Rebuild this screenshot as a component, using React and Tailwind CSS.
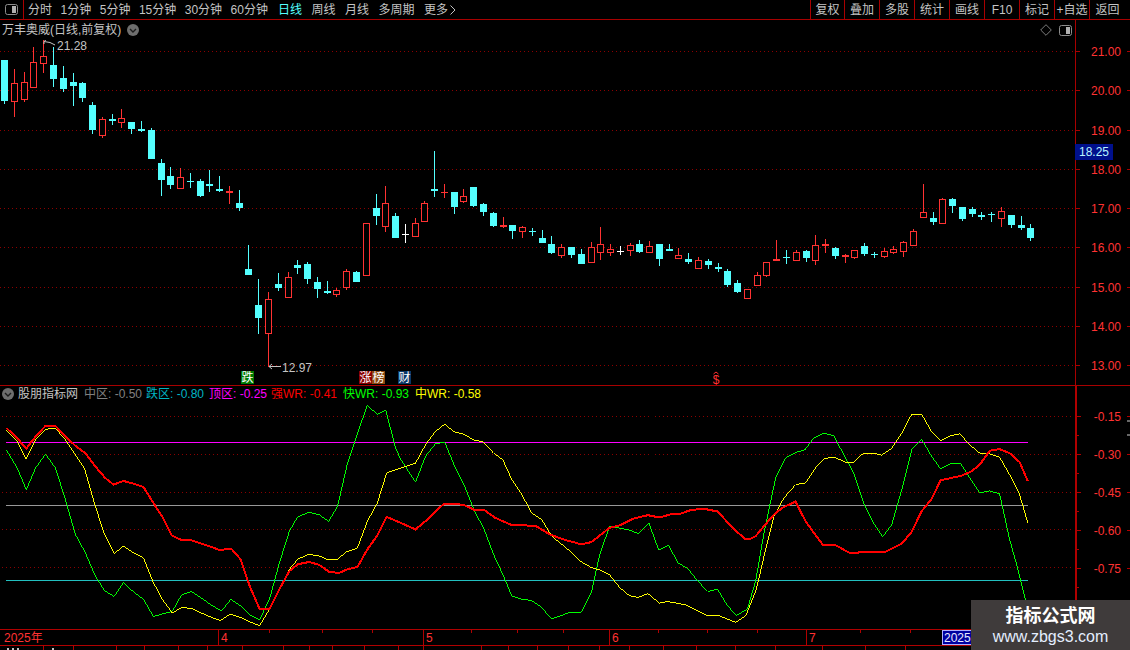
import React from "react";

// [x, bodyTop, bodyBottom, wickTop, wickBottom, kind] kind: c cyan, r red, w white
const candles = [
  [4.5, 60, 101, 60, 104, "c"], [14.5, 83, 101, 69, 117, "r"], [24.5, 82, 99, 72, 102, "r"], [33.5, 62, 87, 47, 87, "r"],
  [43.5, 56, 63, 40, 73, "r"], [53.5, 65, 79, 47, 87, "c"], [63.5, 78, 89, 66, 92, "c"], [73.5, 82, 86, 73, 106, "c"],
  [82.5, 83, 98, 82, 102, "c"], [92.5, 105, 130, 102, 134, "c"], [102.5, 119, 135, 117, 138, "r"], [112.5, 119, 121, 114, 125, "c"],
  [121.5, 118, 122, 109, 128, "r"], [131.5, 122, 129, 122, 134, "c"], [141.5, 129, 131, 121, 132, "c"], [151.5, 130, 159, 128, 159, "c"],
  [161.5, 163, 180, 159, 196, "c"], [170.5, 176, 185, 167, 189, "c"], [180.5, 177, 188, 168, 189, "r"], [190.5, 181, 182, 173, 188, "c"],
  [200.5, 181, 196, 179, 197, "c"], [209.5, 184, 186, 170, 192, "c"], [219.5, 189, 191, 176, 192, "c"], [229.5, 191, 193, 186, 204, "r"],
  [239.5, 203, 208, 190, 211, "c"], [248.5, 269, 275, 245, 275, "c"], [258.5, 305, 318, 279, 334, "c"], [268.5, 299, 333, 292, 367, "r"],
  [278.5, 284, 288, 273, 291, "c"], [288.5, 277, 297, 272, 298, "r"], [297.5, 265, 268, 260, 274, "c"], [307.5, 264, 279, 262, 284, "c"],
  [317.5, 282, 289, 277, 298, "c"], [327.5, 291, 293, 281, 294, "c"], [336.5, 290, 294, 288, 297, "r"], [346.5, 271, 287, 269, 290, "r"],
  [356.5, 272, 282, 271, 282, "c"], [366.5, 223, 275, 223, 276, "r"], [376.5, 208, 216, 194, 225, "c"], [385.5, 203, 226, 186, 232, "r"],
  [395.5, 216, 238, 213, 238, "c"], [405.5, 234, 235, 224, 243, "w"], [415.5, 223, 236, 218, 236, "r"], [424.5, 203, 221, 201, 222, "r"],
  [434.5, 189, 191, 151, 197, "c"], [444.5, 192, 193, 184, 198, "r"], [454.5, 192, 207, 192, 214, "c"], [463.5, 196, 201, 189, 203, "r"],
  [473.5, 187, 206, 187, 207, "c"], [483.5, 204, 212, 203, 216, "c"], [493.5, 213, 226, 212, 227, "c"], [503.5, 225, 227, 217, 228, "r"],
  [512.5, 225, 231, 225, 239, "c"], [522.5, 227, 231, 226, 238, "r"], [532.5, 231, 232, 228, 236, "c"], [542.5, 238, 243, 230, 243, "c"],
  [551.5, 244, 253, 236, 254, "c"], [561.5, 247, 255, 244, 258, "r"], [571.5, 247, 255, 247, 258, "c"], [581.5, 254, 264, 249, 264, "c"],
  [591.5, 247, 262, 242, 262, "r"], [600.5, 244, 252, 227, 260, "r"], [610.5, 249, 252, 244, 256, "r"], [620.5, 251, 252, 246, 255, "w"],
  [630.5, 245, 250, 243, 256, "r"], [639.5, 244, 252, 240, 253, "c"], [649.5, 246, 252, 241, 252, "r"], [659.5, 244, 259, 244, 266, "c"],
  [669.5, 249, 251, 244, 251, "c"], [678.5, 255, 258, 248, 259, "r"], [688.5, 259, 262, 253, 264, "c"], [698.5, 260, 268, 257, 268, "r"],
  [708.5, 261, 265, 259, 269, "c"], [718.5, 267, 269, 263, 272, "c"], [727.5, 271, 285, 269, 287, "c"], [737.5, 283, 292, 280, 293, "c"],
  [747.5, 289, 298, 289, 299, "r"], [757.5, 275, 285, 272, 285, "r"], [766.5, 262, 275, 262, 277, "r"], [776.5, 259, 261, 240, 261, "r"],
  [786.5, 257, 258, 250, 264, "c"], [796.5, 252, 260, 250, 260, "r"], [806.5, 251, 258, 250, 262, "c"], [815.5, 245, 260, 235, 265, "r"],
  [825.5, 244, 246, 239, 253, "r"], [835.5, 248, 256, 247, 259, "c"], [845.5, 255, 257, 254, 263, "r"], [854.5, 250, 257, 250, 259, "r"],
  [864.5, 246, 254, 243, 256, "c"], [874.5, 254, 255, 252, 258, "c"], [884.5, 251, 256, 248, 258, "r"], [893.5, 249, 252, 246, 254, "r"],
  [903.5, 242, 251, 241, 257, "r"], [913.5, 231, 245, 229, 246, "r"], [923.5, 212, 217, 184, 217, "r"], [933.5, 218, 222, 212, 225, "c"],
  [942.5, 199, 223, 198, 223, "r"], [952.5, 199, 206, 198, 213, "c"], [962.5, 207, 219, 207, 221, "c"], [972.5, 209, 214, 207, 217, "c"],
  [981.5, 215, 217, 212, 220, "c"], [991.5, 214, 215, 212, 222, "c"], [1001.5, 211, 218, 207, 227, "r"], [1011.5, 215, 225, 215, 228, "c"],
  [1021.5, 225, 228, 216, 230, "c"], [1030.5, 228, 238, 224, 241, "c"],
];

const candleColor = { c: "#54ffff", r: "#ff3232", w: "#ffffff" };

// line points were read off 3x crops, so they are stored as crop coords + x offset
const crop = (ox, pts) => pts.map(([x, y]) => `${ox + x / 3},${400 + y / 3}`).join(" ");

const redLine = [
  crop(0, [[12, 84], [45, 115], [72, 147], [100, 110], [130, 78], [160, 78], [190, 110], [220, 138], [250, 160], [280, 200], [310, 235], [335, 255], [365, 244], [395, 252], [425, 262], [455, 310], [482, 352], [510, 408], [540, 422], [570, 423], [600, 433], [630, 443], [655, 452], [690, 448], [718, 480], [745, 560], [775, 630], [805, 630], [835, 570], [865, 515], [890, 495], [925, 488], [955, 497], [985, 518], [1015, 521], [1040, 510], [1070, 503], [1100, 450], [1130, 408], [1158, 352], [1200, 370]]),
  crop(400, [[45, 390], [75, 365], [105, 335], [132, 312], [160, 313], [190, 316], [220, 330], [250, 330], [285, 355], [335, 377], [370, 377], [410, 381], [450, 405], [490, 420], [545, 435], [575, 428], [630, 385], [660, 378], [700, 358], [745, 347], [780, 354], [815, 344], [840, 344], [870, 333], [910, 327], [955, 336], [1005, 390], [1040, 420]]),
  crop(740, [[30, 420], [50, 410], [75, 380], [105, 345], [130, 325], [170, 306], [200, 365], [225, 400], [253, 437], [290, 437], [335, 462], [375, 458], [440, 458], [490, 433], [520, 397], [550, 335], [580, 298], [607, 242], [670, 228], [700, 215], [725, 195], [755, 153], [785, 148], [815, 160], [845, 187], [870, 245]]),
].join(" ");

const yellowLine = [
  crop(0, [[12, 90], [45, 125], [72, 178], [100, 120], [130, 88], [160, 85], [190, 120], [220, 165], [247, 205], [280, 320], [308, 405], [337, 463], [365, 440], [395, 460], [425, 476], [455, 550], [482, 600], [512, 642], [540, 625], [570, 628], [600, 642], [630, 655], [657, 664], [687, 645], [718, 655], [745, 668], [775, 680], [805, 630], [835, 570], [865, 510], [890, 480], [920, 466], [950, 468], [980, 481], [1008, 481], [1040, 455], [1070, 445], [1100, 365], [1130, 310], [1158, 220], [1200, 205]]),
  crop(400, [[45, 190], [75, 135], [105, 95], [133, 73], [160, 95], [190, 103], [220, 120], [250, 127], [280, 160], [308, 180], [335, 240], [365, 285], [395, 340], [425, 360], [455, 410], [510, 455], [545, 488], [575, 505], [600, 512], [630, 527], [660, 565], [690, 590], [715, 595], [745, 583], [780, 612], [805, 607], [860, 618], [920, 648], [955, 648], [1010, 670], [1040, 650]]),
  crop(740, [[30, 625], [52, 570], [80, 450], [105, 350], [135, 295], [170, 255], [200, 250], [230, 205], [255, 177], [285, 172], [320, 187], [345, 187], [375, 160], [405, 160], [430, 166], [460, 145], [490, 100], [520, 43], [550, 43], [580, 95], [607, 122], [635, 108], [665, 102], [695, 135], [725, 160], [755, 162], [785, 172], [815, 225], [845, 285], [870, 370]]),
].join(" ");

const greenLine = [
  crop(0, [[12, 150], [45, 205], [72, 270], [100, 205], [130, 163], [160, 205], [190, 300], [220, 405], [250, 460], [280, 530], [308, 575], [337, 592], [365, 550], [395, 578], [425, 600], [455, 652], [512, 637], [540, 587], [570, 577], [600, 597], [630, 618], [660, 636], [688, 601], [718, 620], [745, 648], [775, 662], [805, 600], [835, 490], [865, 395], [890, 352], [925, 338], [955, 346], [983, 366], [1010, 320], [1040, 190], [1070, 100], [1100, 16], [1130, 44], [1155, 30], [1185, 145], [1200, 178]]),
  crop(400, [[45, 248], [75, 170], [105, 132], [133, 127], [165, 205], [195, 265], [225, 340], [250, 385], [280, 465], [310, 530], [335, 590], [365, 600], [395, 604], [425, 625], [455, 660], [510, 640], [545, 640], [575, 580], [600, 465], [630, 380], [690, 392], [717, 403], [748, 370], [778, 453], [808, 438], [835, 490], [865, 508], [895, 545], [925, 577], [955, 570], [985, 620], [1012, 649], [1042, 632]]),
  crop(740, [[25, 630], [50, 545], [75, 400], [110, 235], [140, 175], [170, 158], [198, 150], [225, 115], [255, 100], [285, 108], [345, 220], [375, 310], [405, 370], [433, 412], [460, 375], [490, 270], [520, 150], [550, 118], [580, 170], [607, 207], [635, 193], [667, 190], [695, 235], [725, 280], [755, 274], [785, 283], [815, 420], [840, 510], [862, 600], [870, 640]]),
].join(" ");

const periods = ["分时", "1分钟", "5分钟", "15分钟", "30分钟", "60分钟"];
const periods2 = ["日线", "周线", "月线", "多周期", "更多"];
const tools = [
  { label: "复权", w: "w-[34px]" }, { label: "叠加", w: "w-[35px]" }, { label: "多股", w: "w-[35px]" },
  { label: "统计", w: "w-[35px]" }, { label: "画线", w: "w-[35px]" }, { label: "F10", w: "w-[35px]" },
  { label: "标记", w: "w-[35px]" }, { label: "+自选", w: "w-[35px]" }, { label: "返回", w: "w-[36px]" },
];
const priceGrid = [51.5, 90.5, 130.5, 169.5, 208.5, 247.5, 287.5, 326.5, 365.5];
const prices = ["21.00", "20.00", "19.00", "18.00", "17.00", "16.00", "15.00", "14.00", "13.00"];
const wrGrid = [416.5, 454.5, 492.5, 530.5, 568.5];
const wrMinor = [435.5, 473.5, 511.5, 549.5, 587.5];
const wrLabels = ["-0.15", "-0.30", "-0.45", "-0.60", "-0.75"];
const legend = [
  { name: "中区", value: "-0.50", color: "text-[#808080]", w: "w-[62px]" },
  { name: "跌区", value: "-0.80", color: "text-[#00b4c4]", w: "w-[63px]" },
  { name: "顶区", value: "-0.25", color: "text-[#ff00ff]", w: "w-[62px]" },
  { name: "强WR", value: "-0.41", color: "text-[#ff0000]", w: "w-[72px]" },
  { name: "快WR", value: "-0.93", color: "text-[#00ff00]", w: "w-[72px]" },
  { name: "中WR", value: "-0.58", color: "text-[#ffff00]", w: "w-[68px]" },
];
const axisTopTicks = [269, 322, 372, 471, 517, 563, 658, 707, 757, 860, 910];
const axisBottomTicks = [43, 73, 116, 144, 178, 207, 242, 283, 309, 332, 364, 398, 423, 481, 508, 537, 568, 599, 629, 663, 696, 735, 775, 822, 865, 905];

const ToggleIcon = () => (
  <svg width="13" height="11" viewBox="0 0 13 11">
    <rect x="0.5" y="0.5" width="12" height="10" rx="2" fill="none" stroke="#8c8c8c" />
    <rect x="7" y="2" width="4" height="7" fill="#b0b0b0" />
  </svg>
);

const RoundChevron = () => (
  <svg width="12" height="12" viewBox="0 0 12 12">
    <circle cx="6" cy="6" r="6" fill="#6e6e6e" />
    <path d="M3 5 L6 8 L9 5" fill="none" stroke="#1c1c1c" strokeWidth="1.4" />
  </svg>
);

const Candle = ({ c }) => {
  const [x, top, bottom, wickTop, wickBottom, kind] = c;
  const color = candleColor[kind];
  const cross = bottom - top <= 2;
  return (
    <g shapeRendering="crispEdges">
      <line x1={x} x2={x} y1={wickTop} y2={wickBottom} stroke={color} />
      {cross ? (
        <rect x={x - 3.5} y={top} width="7" height={bottom - top} fill={color} />
      ) : kind === "r" ? (
        <rect x={x - 3} y={top + 0.5} width="6" height={bottom - top} fill="#000" stroke={color} />
      ) : (
        <rect x={x - 3.5} y={top} width="7" height={bottom - top} fill={color} />
      )}
    </g>
  );
};

const Signal = ({ x, w = 13, bg, text }) => (
  <g>
    <rect x={x} y="371" width={w} height="13" fill={bg} />
    <text x={x + w / 2} y="382" fontSize="12" fill="#fff" textAnchor="middle">{text}</text>
  </g>
);

const App = () => {
  return (
    <div className="relative w-[1130px] h-[650px] overflow-hidden bg-black flex flex-col text-xs text-[#c4c4c4] font-['Liberation_Sans','Noto_Sans_CJK_SC',sans-serif]">
      {/* toolbar */}
      <div className="h-[20px] shrink-0 flex items-center border-b border-[#a80000]">
        <div className="w-[24px] h-full flex items-center justify-center border-r border-[#a80000]">
          <ToggleIcon />
        </div>
        <div className="flex items-center gap-[8.5px] ml-[4px]">
          {periods.map((p) => (
            <span key={p}>{p}</span>
          ))}
        </div>
        <div className="flex items-center gap-[9.5px] ml-[10px]">
          {periods2.map((p) => (
            <span key={p} className={p === "日线" ? "text-[#54ffff]" : ""}>{p}</span>
          ))}
        </div>
        <svg width="6" height="10" viewBox="0 0 6 10" className="ml-[2px]">
          <path d="M0.5 0.5 L5 5 L0.5 9.5" fill="none" stroke="#c4c4c4" />
        </svg>
        <div className="ml-auto mr-[5px] h-full flex">
          {tools.map((t) => (
            <div key={t.label} className={`${t.w} flex items-center justify-center border-l border-[#a80000]`}>
              {t.label}
            </div>
          ))}
        </div>
      </div>

      {/* price pane */}
      <div className="h-[366px] shrink-0 flex border-b border-[#a80000]">
        <div className="w-[1075px] flex flex-col">
          <div className="h-[20px] shrink-0 flex items-center pl-[2px]">
            <span>万丰奥威(日线,前复权)</span>
            <span className="ml-[6px] flex"><RoundChevron /></span>
            <div className="ml-auto mr-[3px] flex items-center gap-[7px]">
              <svg width="12" height="12" viewBox="0 0 12 12">
                <path d="M6 0.7 L11.3 6 L6 11.3 L0.7 6 Z" fill="none" stroke="#7c7c7c" />
              </svg>
              <ToggleIcon />
            </div>
          </div>
          <svg width="1075" height="345" viewBox="0 40 1075 345">
            {priceGrid.map((y) => (
              <line key={y} x1="0" x2="1075" y1={y} y2={y} stroke="#8c0000" strokeDasharray="1 3" shapeRendering="crispEdges" />
            ))}
            {candles.map((c) => (
              <Candle key={c[0]} c={c} />
            ))}
            <path d="M44 41.5 L50 42.5 L55 45 M44 41.5 L46.5 39.5 M44 41.5 L44 44" fill="none" stroke="#c4c4c4" />
            <text x="57" y="50" fontSize="12" fill="#c4c4c4">21.28</text>
            <path d="M269 366.5 L281 366.5 M269 366.5 L272 364 M269 366.5 L272 369" fill="none" stroke="#c4c4c4" />
            <text x="282" y="371.5" fontSize="12" fill="#c4c4c4">12.97</text>
            <Signal x={241} bg="#007a00" text="跌" />
            <Signal x={359} bg="#8a0000" text="涨" />
            <Signal x={372} bg="#8c4a10" text="榜" />
            <Signal x={398} bg="#0a3868" text="财" />
            <text x="716" y="384" fontSize="12" fill="#ff3232" textAnchor="middle">$</text>
            <path d="M713.5 374 L716 372 L718.5 374" fill="none" stroke="#ff3232" />
          </svg>
        </div>
        <div className="relative flex-1 border-l border-[#a80000]">
          <svg width="54" height="365" viewBox="1076 20 54 365">
            {priceGrid.map((y, i) => (
              <g key={y} >
                <line x1="1076" x2="1080" y1={y} y2={y} stroke="#a80000" />
                <line x1="1127" x2="1130" y1={y} y2={y} stroke="#a80000" />
                <text x="1121" y={y + 4.5} fontSize="12" fill="#ff3232" textAnchor="end">{prices[i]}</text>
              </g>
            ))}
          </svg>
          <div className="absolute left-[-1px] top-[124px] w-[38px] h-[16px] flex items-center justify-center bg-[#00108c] text-[#b8f4ff]">
            18.25
          </div>
        </div>
      </div>

      {/* indicator pane */}
      <div className="h-[244px] shrink-0 flex border-b border-[#b00000]">
        <div className="w-[1075px] flex flex-col">
          <div className="h-[15px] shrink-0 flex items-center pl-[2px]">
            <RoundChevron />
            <span className="ml-[4px] w-[66px]">股朋指标网</span>
            {legend.map((l) => (
              <span key={l.name} className={`${l.w} whitespace-nowrap ${l.color}`}>{l.name}: {l.value}</span>
            ))}
          </div>
          <svg width="1075" height="229" viewBox="0 401 1075 229">
            {wrGrid.map((y) => (
              <line key={y} x1="0" x2="1075" y1={y} y2={y} stroke="#8c0000" strokeDasharray="1 3" shapeRendering="crispEdges" />
            ))}
            <g shapeRendering="crispEdges">
              <line x1="4" x2="1030" y1="442.5" y2="442.5" stroke="#ff00ff" />
              <line x1="4" x2="1030" y1="505.5" y2="505.5" stroke="#999999" />
              <line x1="4" x2="1030" y1="581.5" y2="581.5" stroke="#22c0c0" />
              <polyline points={greenLine} fill="none" stroke="#00ff00" />
              <polyline points={yellowLine} fill="none" stroke="#ffff00" />
              <polyline points={redLine} fill="none" stroke="#ff0000" strokeWidth="2" />
            </g>
          </svg>
        </div>
        <div className="flex-1 border-l-2 border-[#b00000]">
          <svg width="53" height="243" viewBox="1077 386 53 243">
            {wrGrid.map((y, i) => (
              <g key={y}>
                <line x1="1077" x2="1081" y1={y} y2={y} stroke="#b00000" />
                <line x1="1127" x2="1130" y1={y} y2={y} stroke="#b00000" />
                <text x="1121" y={y + 4.5} fontSize="12" fill="#ff3232" textAnchor="end">{wrLabels[i]}</text>
              </g>
            ))}
            {wrMinor.map((y) => (
              <line key={y} x1="1077" x2="1079" y1={y} y2={y} stroke="#b00000" />
            ))}
            <line x1="1127" x2="1130" y1="421" y2="421" stroke="#d0d0d0" />
            <line x1="1127" x2="1130" y1="435" y2="435" stroke="#d0d0d0" />
          </svg>
        </div>
      </div>

      {/* date axis */}
      <div className="relative h-[16px] shrink-0 flex items-center border-b border-[#b00000] text-[#ff3232]">
        <span className="w-[218px] pl-[4px]">2025年</span>
        <span className="w-[205px] pl-[2px] border-l border-[#b00000] h-full flex items-center">4</span>
        <span className="w-[186px] pl-[2px] border-l border-[#b00000] h-full flex items-center">5</span>
        <span className="w-[197px] pl-[2px] border-l border-[#b00000] h-full flex items-center">6</span>
        <span className="w-[136px] pl-[2px] border-l border-[#b00000] h-full flex items-center">7</span>
        <span className="w-[40px] pl-[1px] border border-[#b0b0ff] h-full flex items-center bg-[#0000a0] text-[#e8e8ff]">2025</span>
        <svg width="1075" height="3" className="absolute left-0 top-0">
          {axisTopTicks.map((x) => (
            <line key={x} x1={x + 0.5} x2={x + 0.5} y1="0" y2="3" stroke="#b00000" />
          ))}
        </svg>
      </div>

      {/* clipped row under the date axis */}
      <svg width="1130" height="4" className="shrink-0">
        {axisBottomTicks.map((x) => (
          <line key={x} x1={x + 0.5} x2={x + 0.5} y1="0" y2="4" stroke="#b00000" />
        ))}
        <rect x="7" y="2" width="2" height="2" fill="#c4c4c4" />
        <rect x="12" y="2" width="2" height="2" fill="#c4c4c4" />
        <rect x="17" y="2" width="2" height="2" fill="#c4c4c4" />
        <rect x="52" y="2" width="2" height="2" fill="#c4c4c4" />
      </svg>

      {/* watermark */}
      <div className="absolute right-0 bottom-0 w-[159px] h-[50px] flex flex-col items-center justify-center bg-[#3f3b3b]">
        <span className="text-[18px] leading-[24px] font-bold text-white">指标公式网</span>
        <span className="text-[16px] leading-[18px] text-[#e4eeff]">www.zbgs3.com</span>
      </div>
    </div>
  );
};

export default App;
